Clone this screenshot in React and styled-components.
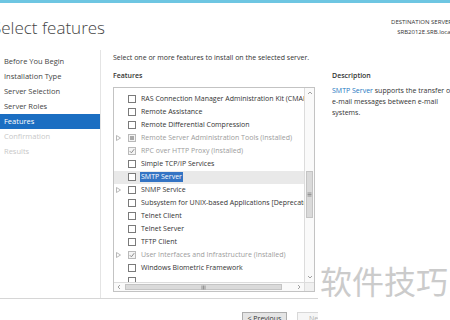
import React from 'react';
import styled, { createGlobalStyle } from 'styled-components';

const GlobalStyle = createGlobalStyle`
  * { box-sizing: border-box; }
  body { margin: 0; background: #fff; }
`;

// ----window shell----
const Window = styled.div`
  position: relative;
  width: 450px;
  height: 320px;
  overflow: hidden;
  display: flex;
  flex-direction: column;
  background: #fff;
  font-family: "Open Sans", "Noto Sans", sans-serif;
  color: #333;
`;
const TopBar = styled.div`
  height: 3px;
  background: #6ec6e2;
`;
const Header = styled.div`
  height: 47px;
  display: flex;
  justify-content: space-between;
  align-items: flex-start;
`;
const Title = styled.h1`
  margin: 15px 0 0 -8px;
  font-size: 17px;
  font-weight: 300;
  line-height: 20px;
  color: #444;
`;
const Destination = styled.div`
  margin: 14px -2px 0 0;
  text-align: right;
  font-size: 6px;
  line-height: 10px;
  color: #333;
`;

/** BODY */
const Body = styled.div`
  flex: 1;
  display: grid;
  grid-template-columns: 101px 1fr;
  min-height: 0;
`;
const Nav = styled.nav`
  border-right: 1px solid #e4e4e4;
  padding-top: 3.5px;
`;
const NavItem = styled.div`
  height: 15px;
  line-height: 15px;
  padding-left: 4px;
  font-size: 7.5px;
  color: ${p => p.$active ? '#fff' : p.$disabled ? '#c8c8c8' : '#444'};
  background: ${p => p.$active ? '#1b6ec2' : 'transparent'};
`;
const Main = styled.main`
  padding: 1.5px 0 0 12px;
`;
const Instruction = styled.div`
  font-size: 7px;
  line-height: 11px;
  white-space: nowrap;
`;
const Columns = styled.div`
  margin-top: 7px;
  display: grid;
  grid-template-columns: 202px 1fr;
  column-gap: 17px;
`;
const Label = styled.div`
  font-size: 7px;
  line-height: 11px;
  font-weight: 600;
  color: #333;
`;

/** FEATURE LIST */
const ListBox = styled.div`
  margin-top: 6.5px;
  height: 205px;
  border: 1px solid #c3c3c3;
  display: grid;
  grid-template-columns: 1fr 10px;
  grid-template-rows: 1fr 9px;
`;
const Rows = styled.div`
  overflow: hidden;
  padding-top: 4.5px;
  min-height: 0;
`;
const Row = styled.div`
  height: 13px;
  display: flex;
  align-items: center;
  background: ${p => p.$selected ? '#e9e9e9' : 'transparent'};
  white-space: nowrap;
`;
const Expander = styled.span`
  width: 14px;
  flex: none;
  display: flex;
  align-items: center;
  padding-left: 2px;
`;
const Check = styled.span`
  width: 8px;
  height: 8px;
  flex: none;
  margin-right: 5px;
  border: 1px solid ${p => p.$installed ? '#b9b9b9' : '#7a7a7a'};
  background: ${p => p.$installed ? '#f4f4f4' : '#fff'};
  display: flex;
  align-items: center;
  justify-content: center;
`;
const PartialMark = styled.span`
  width: 4px;
  height: 4px;
  background: #a8a8a8;
`;
const RowText = styled.span`
  font-size: 7px;
  line-height: 10px;
  padding: 0 1px;
  margin-left: -1px;
  color: ${p => p.$selected ? '#fff' : p.$installed ? '#9c9c9c' : '#333'};
  background: ${p => p.$selected ? '#3474c4' : 'transparent'};
`;

/** SCROLLBARS */
const VScroll = styled.div`
  border-left: 1px solid #dcdcdc;
  background: #fafafa;
  display: flex;
  flex-direction: column;
  align-items: center;
`;
const ArrowCell = styled.div`
  width: 100%;
  height: 10px;
  flex: none;
  display: flex;
  align-items: center;
  justify-content: center;
`;
const VTrack = styled.div`
  flex: 1;
  width: 100%;
  padding: 73px 1px 0;
`;
const VThumb = styled.div`
  height: 47px;
  background: #dadada;
  border: 1px solid #c4c4c4;
  display: flex;
  align-items: center;
  justify-content: center;
`;
const HScroll = styled.div`
  border-top: 1px solid #dcdcdc;
  background: #fafafa;
  display: flex;
  align-items: center;
`;
const HArrow = styled.div`
  width: 10px;
  height: 100%;
  flex: none;
  display: flex;
  align-items: center;
  justify-content: center;
`;
const HTrack = styled.div`
  flex: 1;
  height: 100%;
  padding: 1px 12px 1px 1px;
`;
const HThumb = styled.div`
  height: 100%;
  background: #dadada;
  border: 1px solid #c4c4c4;
  display: flex;
  align-items: center;
  justify-content: center;
`;
const Corner = styled.div`
  background: #f0f0f0;
  border-top: 1px solid #dcdcdc;
  border-left: 1px solid #dcdcdc;
`;

/** DESCRIPTION */
const DescText = styled.div`
  margin-top: 4px;
  font-size: 7px;
  line-height: 11px;
  white-space: nowrap;
  color: #333;
`;
const DescLink = styled.span`
  color: #1e78c2;
`;

/** FOOTER */
const Footer = styled.div`
  height: 22px;
  border-top: 1px solid #d6d6d6;
  display: flex;
  justify-content: flex-end;
  gap: 10px;
  padding: 13px 108px 0 0;
`;
const Button = styled.div`
  width: 45px;
  height: 14px;
  border: 1px solid ${p => p.$dim ? '#d8d8d8' : '#adadad'};
  background: ${p => p.$dim ? '#f6f6f6' : '#e5e5e5'};
  font-size: 7px;
  line-height: 11px;
  text-align: center;
  color: ${p => p.$dim ? '#b0b0b0' : '#333'};
`;

/** WATERMARK (lies over the window) */
const Watermark = styled.div`
  position: absolute;
  left: 318px;
  top: 252px;
  right: 0;
  bottom: 0;
  background: #fff;
  padding: 10px 0 0 2px;
  font-family: "Noto Sans CJK SC", sans-serif;
  font-size: 32px;
  line-height: 36px;
  color: #cbcbcb;
  white-space: nowrap;
`;

const Triangle = () => (
  <svg width="5" height="6" viewBox="0 0 5 6">
    <path d="M0.5 0.5 L4.5 3 L0.5 5.5 Z" fill="none" stroke="#a6a6a6" strokeWidth="0.8" />
  </svg>
);
const Tick = () => (
  <svg width="6" height="6" viewBox="0 0 6 6">
    <path d="M0.8 3.2 L2.4 4.8 L5.2 1.2" fill="none" stroke="#8c8c8c" strokeWidth="1" />
  </svg>
);
const Chevron = ({ dir }) => {
  const paths = {
    up: 'M1 4 L3 2 L5 4',
    down: 'M1 2 L3 4 L5 2',
    left: 'M4 1 L2 3 L4 5',
    right: 'M2 1 L4 3 L2 5',
  };
  return (
    <svg width="6" height="6" viewBox="0 0 6 6">
      <path d={paths[dir]} fill="none" stroke="#8a8a8a" strokeWidth="0.8" />
    </svg>
  );
};
const Grip = ({ vertical }) => (
  <svg width="5" height="5" viewBox="0 0 5 5">
    {vertical
      ? [1, 2.5, 4].map(y => <line key={y} x1="0.5" x2="4.5" y1={y} y2={y} stroke="#777" strokeWidth="0.7" />)
      : [1, 2.5, 4].map(x => <line key={x} y1="0.5" y2="4.5" x1={x} x2={x} stroke="#777" strokeWidth="0.7" />)}
  </svg>
);

const navItems = [
  { label: 'Before You Begin' },
  { label: 'Installation Type' },
  { label: 'Server Selection' },
  { label: 'Server Roles' },
  { label: 'Features', active: true },
  { label: 'Confirmation', disabled: true },
  { label: 'Results', disabled: true },
];

// state: 'off' | 'on' (installed, checked) | 'partial' (installed, part of it)
const features = [
  { name: 'RAS Connection Manager Administration Kit (CMAK)' },
  { name: 'Remote Assistance' },
  { name: 'Remote Differential Compression' },
  { name: 'Remote Server Administration Tools (Installed)', state: 'partial', sub: true },
  { name: 'RPC over HTTP Proxy (Installed)', state: 'on' },
  { name: 'Simple TCP/IP Services' },
  { name: 'SMTP Server', selected: true },
  { name: 'SNMP Service', sub: true },
  { name: 'Subsystem for UNIX-based Applications [Deprecated]' },
  { name: 'Telnet Client' },
  { name: 'Telnet Server' },
  { name: 'TFTP Client' },
  { name: 'User Interfaces and Infrastructure (Installed)', state: 'on', sub: true },
  { name: 'Windows Biometric Framework' },
  { name: '' },
];

const App = () => {
  return (
    <Window>
      <GlobalStyle />
      <TopBar />
      <Header>
        <Title>Select features</Title>
        <Destination>
          DESTINATION SERVER<br />SRB2012E.SRB.local
        </Destination>
      </Header>
      <Body>
        <Nav>
          {navItems.map(item => (
            <NavItem key={item.label} $active={item.active} $disabled={item.disabled}>
              {item.label}
            </NavItem>
          ))}
        </Nav>
        <Main>
          <Instruction>Select one or more features to install on the selected server.</Instruction>
          <Columns>
            <div>
              <Label>Features</Label>
              <ListBox>
                <Rows>
                  {features.map((f, i) => {
                    const installed = f.state === 'on' || f.state === 'partial';
                    return (
                      <Row key={i} $selected={f.selected}>
                        <Expander>{f.sub && <Triangle />}</Expander>
                        <Check $installed={installed}>
                          {f.state === 'on' && <Tick />}
                          {f.state === 'partial' && <PartialMark />}
                        </Check>
                        <RowText $installed={installed} $selected={f.selected}>{f.name}</RowText>
                      </Row>
                    );
                  })}
                </Rows>
                <VScroll>
                  <ArrowCell><Chevron dir="up" /></ArrowCell>
                  <VTrack>
                    <VThumb><Grip vertical /></VThumb>
                  </VTrack>
                  <ArrowCell><Chevron dir="down" /></ArrowCell>
                </VScroll>
                <HScroll>
                  <HArrow><Chevron dir="left" /></HArrow>
                  <HTrack>
                    <HThumb><Grip /></HThumb>
                  </HTrack>
                  <HArrow><Chevron dir="right" /></HArrow>
                </HScroll>
                <Corner />
              </ListBox>
            </div>
            <div>
              <Label>Description</Label>
              <DescText>
                <DescLink>SMTP Server</DescLink> supports the transfer of<br />
                e-mail messages between e-mail<br />
                systems.
              </DescText>
            </div>
          </Columns>
        </Main>
      </Body>
      <Footer>
        <Button>&lt; Previous</Button>
        <Button $dim>Next &gt;</Button>
      </Footer>
      <Watermark>软件技巧</Watermark>
    </Window>
  );
};

export default App;
